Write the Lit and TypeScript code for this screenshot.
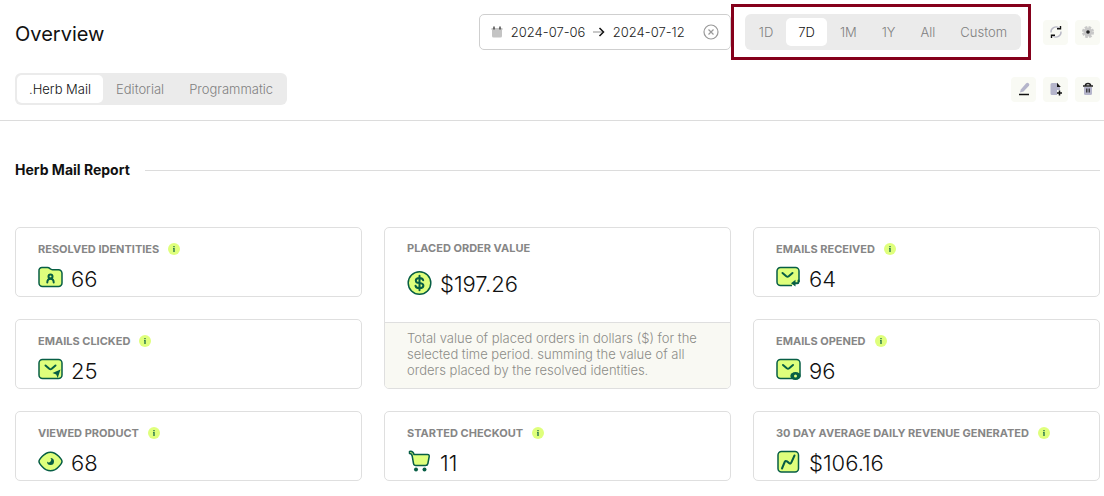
import { LitElement, html, css, svg, nothing } from "lit";
import { customElement, property, state } from "lit/decorators.js";
import { classMap } from "lit/directives/class-map.js";

const icons: Record<string, unknown> = {
  identities: svg`
    <path class="shape" d="M1 5a3 3 0 0 1 3-3.500h5.500c1.400 0 1.800.5 2.600 1.300.7.700 1.200.9 2.400.9H20.500a3.500 3.500 0 0 1 3.500 3.500V17a3.500 3.500 0 0 1-3.500 3.500H4.500A3.500 3.500 0 0 1 1 17z"/>
    <circle class="mark" cx="12.500" cy="10.500" r="2"/>
    <path class="mark" d="M9.300 16.500c0-2.500 1.200-3.700 3.200-3.700s3.200 1.200 3.200 3.700"/>`,
  clicked: svg`
    <rect class="shape" x="1" y="1.500" width="23" height="19" rx="3.500"/>
    <path class="mark" d="M7.500 7.500l3.800 3.200q1.200.9 2.400 0l3.800-3.200"/>
    <path class="solid" d="M22.500 11.500 14.500 15l3.700 1.400 1.500 3.600z"/>`,
  received: svg`
    <path class="shape" d="M16 19.500H4.500A3.500 3.500 0 0 1 1 16V5a3.500 3.500 0 0 1 3.500-3.500h15A3.500 3.500 0 0 1 23 5v11"/>
    <path class="mark" d="M6.500 7l3.800 3.200q1.200.9 2.400 0L16.500 7"/>
    <path class="mark" d="M22.500 14.500v1.500q0 1.200-1.200 1.200H18"/>
    <path class="solid" d="M19.500 13.800v6.800L15 17.200z"/>`,
  opened: svg`
    <rect class="shape" x="1" y="1.500" width="23" height="19" rx="3.500"/>
    <path class="mark" d="M7 7l3.800 3.200q1.200.9 2.400 0L17 7"/>
    <ellipse class="solid" cx="19.500" cy="18" rx="5.200" ry="4"/>
    <circle class="fill" cx="19.500" cy="18" r="1.500"/>`,
  viewed: svg`
    <path class="shape" d="M1 11.500c0-1.500 5-9.300 11.500-9.300S24 10 24 11.500s-5 9.300-11.500 9.300S1 13 1 11.500z"/>
    <path class="solid" d="M12.500 8a3.500 3.500 0 1 1-3.500 3.500 2 2 0 0 0 3.500-3.500z"/>`,
  checkout: svg`
    <path class="shape" d="M2.500 1.500q3.500-.8 4.500 3h13.500q2 0 1.700 2l-1.300 7q-.4 2-2.400 2H8.800q-2 0-2.300-2L5.200 6Q4.800 3.500 2.500 3.500z"/>
    <circle class="solid" cx="9" cy="19.500" r="2"/>
    <circle class="solid" cx="17.500" cy="19.500" r="2"/>`,
  revenue: svg`
    <rect class="shape" x="2" y="1.500" width="20.500" height="20.500" rx="3.500"/>
    <path class="mark" d="M6 18.500l2.700-6.500q.8-1.800 2.300-.6l2.200 1.700q1.500 1 2.200-.7L18.500 5.500"/>`,
  order: svg`
    <circle class="shape" cx="12.500" cy="12" r="11.300"/>
    <path class="mark" d="M12.500 4.800v14.400M16.200 9.200q-.5-2.300-3.700-2.300-3.700 0-3.700 2.500t3.700 2.600q3.900.4 3.900 2.700t-3.900 2.400q-3.500 0-4-2.400"/>`,
  refresh: svg`
    <path d="M3 8.500A5 5 0 0 1 11 4M13 7.500A5 5 0 0 1 5 12" fill="none" stroke="#b9b9c6" stroke-width="1.400"/>
    <path d="M9 4.700h3.500V2M7 11.300H3.500V14" fill="none" stroke="#111" stroke-width="1.400"/>`,
  gear: svg`
    <circle cx="8" cy="8" r="4.500" fill="#c8c8c8"/>
    <circle cx="8" cy="8" r="5" fill="none" stroke="#c8c8c8" stroke-width="2.200" stroke-dasharray="2.600 1.327"/>
    <circle cx="8" cy="8" r="1.800" fill="#222"/>`,
  edit: svg`
    <path d="M4 11.500l.8-3L10 2.400q1.300-1.200 2.600-.2t.4 2.600L7.500 10.600z" fill="#b5b5cb"/>
    <path d="M3 13.500h10" stroke="#111" stroke-width="1.500"/>`,
  addfile: svg`
    <path d="M4 2h5v4h3v3H9v5H4q-1.500 0-1.500-1.500v-9Q2.500 2 4 2z" fill="#b5b5cb"/>
    <path d="M9 1.800 12.800 6H9z" fill="#111"/>
    <path d="M11.500 9.500v5M9 12h5" stroke="#111" stroke-width="1.500"/>`,
  trash: svg`
    <path d="M4 6h8v6.500q0 1.500-1.500 1.500h-5Q4 14 4 12.500z" fill="#b5b5cb"/>
    <path d="M3 5h10M5.500 4.500q0-2 2.500-2t2.500 2" fill="none" stroke="#222" stroke-width="1.600"/>
    <path d="M6.800 7.500v4M9.200 7.500v4" stroke="#222" stroke-width="1.200"/>`,
};

@customElement("segment-group")
class SegmentGroup extends LitElement {
  @property({ type: Array }) items: string[] = [];
  @property() selected = "";
  @property() label = "";

  static styles = css`
    :host { display: block; height: 32px; }
    .group {
      display: flex; gap: 1px; box-sizing: border-box; height: 100%;
      padding: 2px; border-radius: 6px; background: #ebebeb;
    }
    :host([large]) { height: 36px; }
    :host([large]) .group { padding: 4px 2px; }
    .item {
      border: 0; margin: 0; padding: 0 12px; border-radius: 5px;
      background: none; color: #808080; cursor: pointer;
      font: 300 13px/18px Inter, sans-serif; white-space: nowrap;
    }
    .active { background: #fff; color: #111; }
  `;

  render() {
    return html`<div class="group" role="group" aria-label=${this.label}>
      ${this.items.map((name) => html`
        <button
          class=${classMap({ item: true, active: name === this.selected })}
          aria-pressed=${name === this.selected}
          @click=${() => (this.selected = name)}
        >${name}</button>`)}
    </div>`;
  }
}

@customElement("metric-card")
class MetricCard extends LitElement {
  @property() label = "";
  @property() value = "";
  @property() icon = "";
  @property() note = "";

  static styles = css`
    :host { display: block; }
    .card {
      display: flex; flex-direction: column; box-sizing: border-box; height: 100%;
      border: 1px solid #dfdfdf; border-radius: 5px; overflow: hidden; background: #fff;
    }
    .body { padding: 12px 22px 4px; flex: 1; }
    .wide .body { padding-top: 11px; }
    .head { display: flex; align-items: center; gap: 9px; }
    .label { margin: 0; font: 700 11px/18px Inter, sans-serif; color: #868686; text-transform: uppercase; }
    .info { width: 12px; height: 12px; padding: 0; border: 0; border-radius: 50%; background: #dfff7c; display: flex; }
    .info svg { width: 12px; height: 12px; }
    .row { display: flex; align-items: flex-start; gap: 8px; margin-top: 8px; }
    .icon { width: 25px; height: 24px; overflow: visible; flex: none; }
    .value { font: 300 22px/26px Inter, sans-serif; color: #111; }
    .wide .row { margin-top: 14px; }
    .note {
      margin: 0; padding: 7px 22px 10px; border-top: 1px solid #dfdfdf; background: #f9f9f3;
      font: 300 13px/16px Inter, sans-serif; color: #8c8c88;
    }
    .shape { fill: #dfff7c; stroke: #075e45; stroke-width: 1.5; stroke-linejoin: round; }
    .mark { fill: none; stroke: #075e45; stroke-width: 2; stroke-linecap: round; stroke-linejoin: round; }
    .solid { fill: #075e45; }
    .fill { fill: #dfff7c; }
  `;

  render() {
    return html`<article class=${classMap({ card: true, wide: !!this.note })}>
      <div class="body">
        <div class="head">
          <h3 class="label">${this.label}</h3>
          ${this.note ? nothing : html`
            <button class="info" aria-label="About ${this.label}">
              <svg viewBox="0 0 12 12"><path d="M6 3v1.200M5.200 5.500H6V9" fill="none" stroke="#075e45" stroke-width="1.200"/></svg>
            </button>`}
        </div>
        <div class="row">
          <svg class="icon" viewBox="0 0 25 24" aria-hidden="true">${icons[this.icon]}</svg>
          <span class="value">${this.value}</span>
        </div>
      </div>
      ${this.note ? html`<p class="note">${this.note}</p>` : nothing}
    </article>`;
  }
}

@customElement("app-root")
class AppRoot extends LitElement {
  @state() private from = "2024-07-06";
  @state() private to = "2024-07-12";

  static styles = css`
    :host { display: block; background: #fff; color: #111; font-family: Inter, sans-serif; }
    .top { display: flex; flex-direction: column; gap: 23px; padding: 14px 4px 15px 15px; border-bottom: 1px solid #dcdcdc; }
    .bar { display: flex; align-items: center; justify-content: space-between; }
    .title { margin: 0; font: 400 20px/26px Inter, sans-serif; padding-top: 4px; }
    .tools { display: flex; align-items: center; }
    .dates {
      display: flex; align-items: center; box-sizing: border-box; width: 252px; height: 36px;
      padding: 0 11px; border: 1px solid #cfcfcf; border-radius: 5px;
    }
    .calendar { width: 12px; height: 12px; margin-right: 8px; flex: none; }
    .date { width: 76px; padding: 0; border: 0; outline: 0; background: none; color: #222; font: 300 13px/18px Inter, sans-serif; }
    .arrow { width: 14px; height: 12px; margin: 0 7px 0 5px; flex: none; }
    .clear { width: 16px; height: 16px; margin-left: auto; padding: 0; border: 0; background: none; display: flex; }
    .clear svg { width: 16px; height: 16px; }
    .range { position: relative; margin: 0 22px 0 14px; }
    .range::before { content: ""; position: absolute; inset: -10px -10px -10px -14px; border: 3px solid #85001b; pointer-events: none; }
    .actions { display: flex; gap: 7px; }
    .action { width: 25px; height: 25px; padding: 0; border: 0; border-radius: 4px; background: #f9faf4; display: grid; place-items: center; }
    .action svg { width: 16px; height: 16px; }
    .report { padding: 40px 4px 15px 15px; }
    .heading { display: flex; align-items: center; gap: 15px; margin-bottom: 48px; }
    .heading::after { content: ""; flex: 1; height: 1px; background: #dcdcdc; }
    .name { margin: 0; font: 700 14px/18px Inter, sans-serif; }
    .grid { display: grid; grid-template-columns: repeat(3, 1fr); gap: 22px; }
    .tall { grid-row: span 2; }
  `;

  private action(icon: string, label: string) {
    return html`<button class="action" aria-label=${label}><svg viewBox="0 0 16 16">${icons[icon]}</svg></button>`;
  }

  render() {
    return html`
      <header class="top">
        <div class="bar">
          <h1 class="title">Overview</h1>
          <div class="tools">
            <div class="dates">
              <svg class="calendar" viewBox="0 0 12 12"><path d="M1 3h10v7q0 1.500-1.500 1.500h-7Q1 11.500 1 10z" fill="#c4c4c4"/><path d="M.5 2h11v2H.5z" fill="#c4c4c4"/><path d="M3 .5v3M9 .5v3" stroke="#333" stroke-width="1.300"/></svg>
              <input class="date" aria-label="Start date" .value=${this.from} />
              <svg class="arrow" viewBox="0 0 14 12"><path d="M1 6h10" stroke="#aaa" stroke-width="1.300"/><path d="M7.500 2l4 4-4 4" fill="none" stroke="#111" stroke-width="1.500"/></svg>
              <input class="date" aria-label="End date" .value=${this.to} />
              <button class="clear" aria-label="Clear dates"><svg viewBox="0 0 16 16" fill="none" stroke="#999" stroke-width="1.200"><circle cx="8" cy="8" r="7"/><path d="M5.500 5.500l5 5M10.500 5.500l-5 5"/></svg></button>
            </div>
            <segment-group class="range" large label="Date range" selected="7D" .items=${["1D", "7D", "1M", "1Y", "All", "Custom"]}></segment-group>
            <div class="actions">${this.action("refresh", "Refresh")}${this.action("gear", "Settings")}</div>
          </div>
        </div>
        <nav class="bar">
          <segment-group label="Dashboards" selected=".Herb Mail" .items=${[".Herb Mail", "Editorial", "Programmatic"]}></segment-group>
          <div class="actions">${this.action("edit", "Edit")}${this.action("addfile", "Add report")}${this.action("trash", "Delete")}</div>
        </nav>
      </header>
      <main class="report">
        <div class="heading"><h2 class="name">Herb Mail Report</h2></div>
        <div class="grid">
          <metric-card label="Resolved identities" value="66" icon="identities"></metric-card>
          <metric-card class="tall" label="Placed order value" value="$197.26" icon="order"
            note="Total value of placed orders in dollars ($) for the selected time period. summing the value of all orders placed by the resolved identities."></metric-card>
          <metric-card label="Emails received" value="64" icon="received"></metric-card>
          <metric-card label="Emails clicked" value="25" icon="clicked"></metric-card>
          <metric-card label="Emails opened" value="96" icon="opened"></metric-card>
          <metric-card label="Viewed product" value="68" icon="viewed"></metric-card>
          <metric-card label="Started checkout" value="11" icon="checkout"></metric-card>
          <metric-card label="30 day average daily revenue generated" value="$106.16" icon="revenue"></metric-card>
        </div>
      </main>`;
  }
}
